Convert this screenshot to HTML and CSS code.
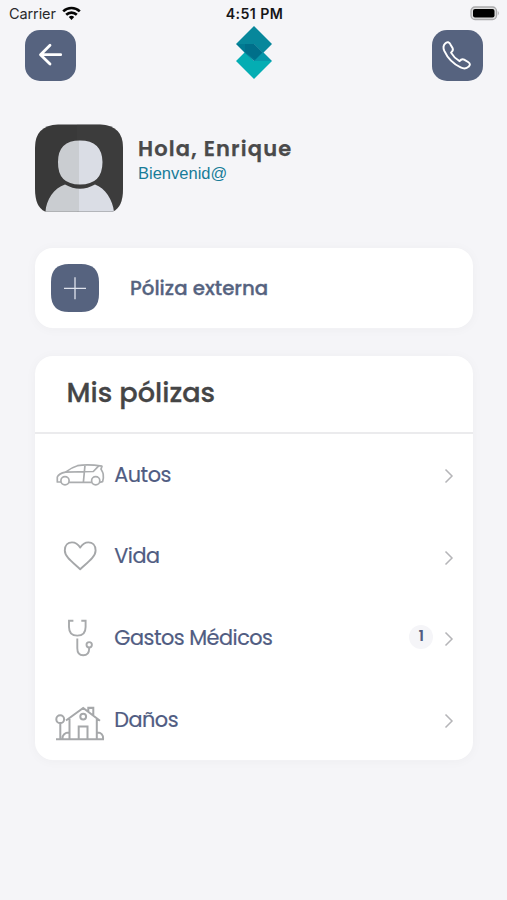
FILE: index.html
```html
<!DOCTYPE html>
<html lang="es">
<head>
<meta charset="utf-8">
<title>Mis pólizas</title>
<link rel="stylesheet" href="styles.css">
</head>
<body>
<div class="status">
  <div class="carrier"><span>Carrier</span>
    <svg width="19" height="15" viewBox="0 0 19 15" fill="none" stroke="#050505" stroke-width="2.6"><path d="M1.2 5.4a12 12 0 0 1 16.6 0M4.2 8.8a7.6 7.6 0 0 1 10.6 0"/><path d="M9.5 14l-2.7-2.9a4 4 0 0 1 5.4 0z" fill="#050505" stroke="none"/></svg>
  </div>
  <time>4:51 PM</time>
  <svg class="battery" width="31" height="15" viewBox="0 0 31 15"><rect x="2" y="1" width="25.5" height="12.5" rx="4" fill="#dededf" stroke="#aaaaac" stroke-width="1.3"/><rect x="4" y="3" width="21.5" height="8.5" rx="2" fill="#000"/><path d="M28.8 5q2 2.2 0 4.5z" fill="#aaaaac"/></svg>
</div>
<header class="nav">
  <button class="tile" aria-label="Atrás"><svg width="51" height="51" viewBox="0 0 51 51" fill="none" stroke="#fff" stroke-width="2.8" stroke-linecap="round" stroke-linejoin="round"><path d="M35.7 24.7H16M25 15.2L15.5 24.7 25 34"/></svg></button>
  <svg class="logo" width="36" height="53" viewBox="0 0 36 53"><path d="M18 0l18 18-9 9-9-9H0z" fill="#07879b"/><path d="M0 35l9-9 9 9h18L18 53z" fill="#04adb3"/><path d="M0 18h18l9 9-8 8h-1l-9-8z" fill="#007a92"/><path d="M9 18h9l9 9-7 7-11-8z" fill="#006f8a"/><path d="M27 26l9 9H18z" fill="#0796a8"/></svg>
  <button class="tile" aria-label="Llamar"><svg width="51" height="51" viewBox="0 0 51 51" fill="none" stroke="#fff" stroke-width="2" stroke-linecap="round" stroke-linejoin="round"><path d="M13.4 13.4c2-2.2 4.3-1.5 5.4 1l2.3 4c.8 1.7-.1 3-1.7 4.4 2.2 3.8 4.9 6.600 8.800 8.800 1.300-1.700 2.800-2.600 4.700-1.600l4.100 2.500c2.400 1.500 2.400 3 .5 4.800-2 2.100-4.700 2.400-8.200.8-8-3.800-13.300-9.300-16.800-17-1.400-3.300-1.300-5.700.9-7.700z" transform="translate(.2 .5) scale(.97)"/></svg></button>
</header>
<section class="profile">
  <svg class="avatar" width="88" height="88" viewBox="0 0 88 88"><defs><clipPath id="person"><path d="M23 38Q23 16.5 45 16.5T67.500 38Q67.500 60.500 45 60.500T23 38zM10.500 88C11 76 19 64 30 60.500Q45 69 60 60.500C70 64 78 76 79 88z"/></clipPath></defs><path fill="#393939" d="M23 .5h42q23 1 23 23v41.500q0 18-10 22.500H10Q0 83 0 65V23.500Q0 1.500 23 .5z"/><path fill="#464647" d="M42 .5h23q23 1 23 23v41.500q0 18-10 22.500H42z" opacity=".25"/><g clip-path="url(#person)"><path fill="#cacdd1" d="M0 0h44v87.500H0z"/><path fill="#dadde5" d="M44 0h44v87.500H44z"/></g></svg>
  <div><h1>Hola, Enrique</h1><p>Bienvenid@</p></div>
</section>
<section class="card external">
  <svg width="48" height="48" viewBox="0 0 48 48"><path d="M18 0h12q18 0 18 18v12q0 18-18 18H18Q0 48 0 30V18Q0 0 18 0z" fill="#56637f"/><path d="M13 24.300h22M24 13.300v22" stroke="#dfe3ed" stroke-width="1.300"/></svg>
  <span>Póliza externa</span>
</section>
<section class="card policies">
  <h2>Mis pólizas</h2>
  <ul>
    <li><svg class="icon" width="50" height="40" viewBox="0 0 50 40" fill="none" stroke="#abadaf" stroke-width="1.7" stroke-linejoin="round"><circle cx="10" cy="25.8" r="4.1"/><circle cx="40.7" cy="25.8" r="4.1"/><path d="M14 27.3h22.7M44.8 27.3l2.800-.6q1.200-3.600.6-7.600c-.3-2-1.200-3.200-2.200-5l1-2.900C38 9.600 28 9.600 22.500 10.700c-4.500 1.200-8.500 3.700-12 6.500-4 .8-6.700 1.500-8.200 4.800V27h3.700M10.500 17.200L38.300 16.500 44 10.700M30 10.200L28.400 27"/></svg><span>Autos</span><svg class="chevron" width="10" height="16" viewBox="0 0 10 16"><path d="M1.5 1.500L8 8l-6.500 6.500"/></svg></li>
    <li><svg class="icon" width="50" height="40" viewBox="0 0 50 40" fill="none" stroke="#a5a7a9" stroke-width="1.9" stroke-linejoin="round"><path d="M25.200 33.200C18 26.500 9.800 21 9.800 14.500c0-5.500 3.200-8.100 7.200-8.100 4 0 6.300 2.100 8.200 5.200 1.900-3.100 4.200-5.200 8.200-5.200s7.200 2.600 7.200 8.100c0 6.500-8.200 12-15.400 18.700z"/></svg><span>Vida</span><svg class="chevron" width="10" height="16" viewBox="0 0 10 16"><path d="M1.500 1.500L8 8l-6.500 6.500"/></svg></li>
    <li><svg class="icon" width="50" height="40" viewBox="0 0 50 40" fill="none" stroke="#a8aaac" stroke-width="1.9"><path d="M18.400 2.800h-4.400v6.100c0 5.600 3.200 8.700 8.300 8.700s8.300-3.100 8.300-8.700V2.800h-4.300M22.300 20.500v9.800c0 4.600 2.200 7 5.900 7s5.900-2.400 5.900-6v-1.700"/><circle cx="34.200" cy="26.800" r="2.700"/></svg><span>Gastos Médicos</span><b class="badge">1</b><svg class="chevron" width="10" height="16" viewBox="0 0 10 16"><path d="M1.500 1.500L8 8l-6.500 6.500"/></svg></li>
    <li><svg class="icon house" width="50" height="40" viewBox="0 0 50 40" fill="none" stroke="#a6a8aa" stroke-width="2"><path d="M1 38.200h48M11 19.500L28.200 7 45 19.700M14.500 18v20M41.800 18v20M33.300 10.500V7.100h5v7.300M32.300 6.800h7M23.700 38V25.400h8.800V38M5.300 22v16M7.500 38c-.5-4 2.500-6.500 6.800-6.400M42 31.600c4-.3 6.500 2.400 6.100 6.400"/><circle cx="5.200" cy="18.200" r="3.900"/><circle cx="28.200" cy="15.600" r="2.900"/></svg><span>Daños</span><svg class="chevron" width="10" height="16" viewBox="0 0 10 16"><path d="M1.500 1.500L8 8l-6.500 6.500"/></svg></li>
  </ul>
</section>
</body>
</html>
```
FILE: styles.css
```css
* { box-sizing: border-box; }
body {
  margin: 0;
  min-height: 900px;
  background: #f5f5f8;
  font-family: Poppins, Inter, sans-serif;
  color: #56637f;
}
h1, h2, p, ul { margin: 0; padding: 0; }
svg { display: block; flex: none; }
.status {
  display: grid;
  grid-template-columns: 1fr auto 1fr;
  align-items: center;
  height: 28px;
  padding: 0 7px 0 9px;
  font: 14.5px Inter, sans-serif;
  color: #29292b;
}
.carrier { display: flex; align-items: center; gap: 6px; margin-top: -1px; letter-spacing: -.1px; }
.carrier svg { margin-top: -1px; }
.status time { font-size: 14.2px; font-weight: 600; letter-spacing: .4px; margin-top: -1px; color: #161618; }
.battery { justify-self: end; margin-top: -2px; }
.nav { display: flex; justify-content: space-between; height: 54px; padding: 2px 24px 0 25px; }
.tile {
  width: 51px;
  height: 51px;
  padding: 0;
  border: 0;
  border-radius: 15px;
  background: #56637f;
}
.logo { margin-top: -4px; }
.profile { display: flex; gap: 15px; margin: 42px 35px 0; }
.profile h1 {
  margin-top: 11px;
  font-size: 21px;
  line-height: 28px;
  font-weight: 600;
  letter-spacing: 1.15px;
  -webkit-text-stroke: .25px;
  color: #4a4a4b;
  white-space: nowrap;
}
.profile p { font: 16.5px/20px "Liberation Sans", sans-serif; color: #187c98; }
.card {
  margin: 0 34px 0 35px;
  background: #fff;
  border-radius: 18px;
  box-shadow: 0 1px 12px rgba(50, 50, 60, .035);
}
.external {
  display: flex;
  align-items: center;
  gap: 31px;
  height: 80px;
  margin-top: 36px;
  padding: 0 16px;
  font-size: 19.8px;
  font-weight: 500;
  -webkit-text-stroke: .3px;
}
.policies { height: 404px; margin-top: 28px; }
.policies h2 {
  height: 78px;
  padding: 16px 31.5px 0;
  border-bottom: 2px solid #ebebed;
  font-size: 27.2px;
  line-height: 42px;
  font-weight: 500;
  -webkit-text-stroke: .3px;
  color: #454546;
}
.policies ul { list-style: none; }
.policies li {
  display: flex;
  align-items: center;
  height: 81.6px;
  padding: 0 19px 0 20px;
  font-size: 20.8px;
  letter-spacing: -.5px;
  color: #505c82;
  -webkit-text-stroke: .2px;
}
.policies li span { margin-top: -1px; }
.icon { margin-right: 9.3px; }
.house { margin-top: 3px; }
.chevron { margin: 3px 0 0 auto; fill: none; stroke: #b5b5b8; stroke-width: 1.5; }
.badge {
  display: grid;
  place-items: center;
  width: 24px;
  height: 24px;
  margin: -2px 0 0 auto;
  border-radius: 50%;
  background: #f5f5f8;
  font-size: 14px;
  font-weight: 600;
}
.badge + .chevron { margin-left: 11px; }
```
